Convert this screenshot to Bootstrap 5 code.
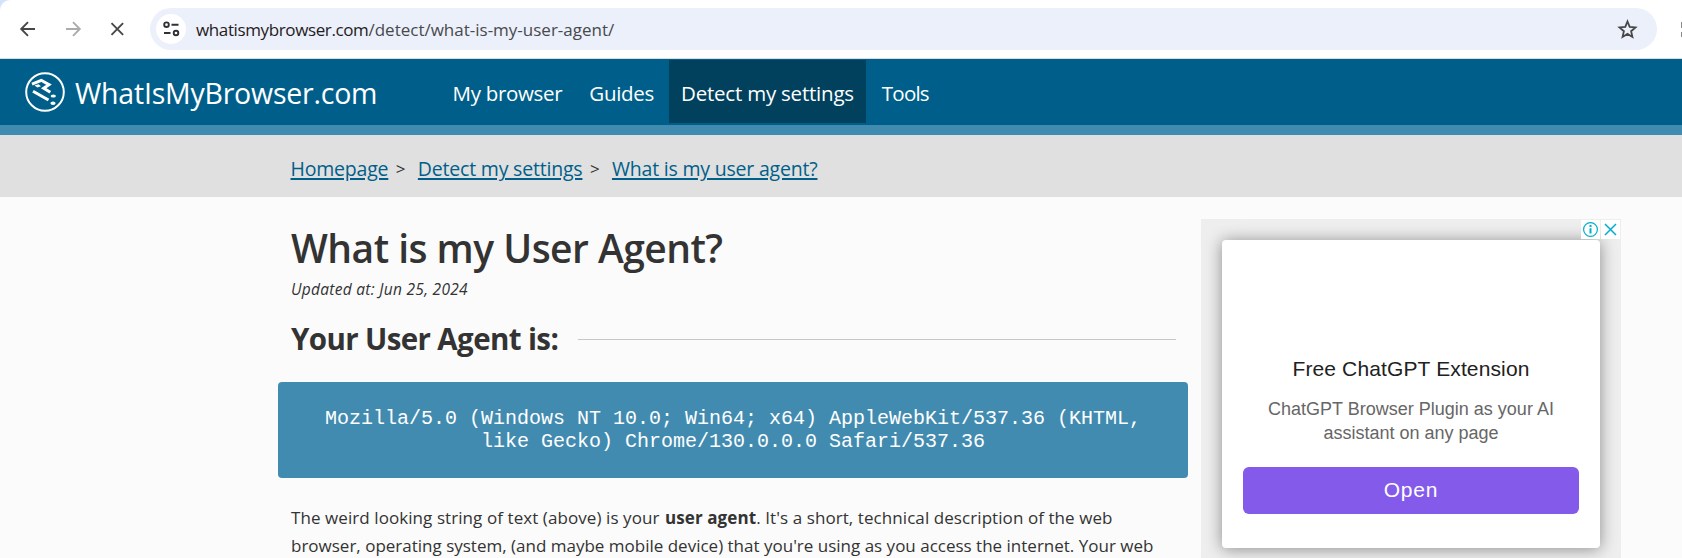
<!DOCTYPE html>
<html lang="en">
<head>
<meta charset="utf-8">
<title>What is my user agent?</title>
<meta name="viewport" content="width=device-width, initial-scale=1">
<link href="https://cdn.jsdelivr.net/npm/bootstrap@5.3.0/dist/css/bootstrap.min.css" rel="stylesheet">
<style>
body{font-family:"Open Sans","Noto Sans",sans-serif;color:#333;background:#fbfbfb;height:558px;overflow:hidden}
.strip{background:#d3e2fd}
.toolbar{height:59px;background:#fff;border-bottom:1px solid #dcdcdc;border-top-left-radius:10px;padding-left:16px}
.tool-ico{width:24px;height:24px;flex:none}
.tool-ico + .tool-ico{margin-left:20.5px}
.omnibox{width:1507px;height:42px;margin-left:21px;background:#ecf0fa;border-radius:21px;padding:0 18px 0 6px}
.site-info{width:30px;height:30px;background:#fff}
.url{font-size:17px;line-height:24px;margin:1px 0 0 10px;color:#47494d}
.url b{font-weight:400;color:#1f2023;letter-spacing:-.38px}
.site-nav{height:76px;background:#005f8a;border-bottom:10px solid #428bb0;padding:0 0 0 25px}
.brand-name{font-size:28.5px;line-height:40px;letter-spacing:-.22px;color:#fff;margin:2px 0 0 10px;width:365px}
.site-nav .nav{gap:2px;margin-bottom:1px}
.site-nav .nav-link{font-size:20.5px;line-height:66px;height:63px;padding:0 12.5px;color:#fff;letter-spacing:-.3px;white-space:nowrap}
.site-nav .nav-link.active{background:#01415e;letter-spacing:-.22px}
.site-nav .nav-link.tight{letter-spacing:-.8px;margin-left:1px}
.crumbs{height:62px;background:#e0e0e0;padding:19px 0 0 290.5px;font-size:19.5px;line-height:30px;letter-spacing:-.2px}
.crumbs a{color:#005f8a;text-decoration-thickness:2px;text-underline-offset:2px}
.crumbs span{font-size:17px;margin:0 8.500px 0 7.500px}
.page{padding-left:278px}
.main-col{width:910px;padding-top:26px}
.inset{padding:0 12px 0 13px}
h1{font-size:39px;line-height:50px;font-weight:600;letter-spacing:-.53px}
.updated{font-size:15.5px;line-height:24px;margin:4px 0 18px;font-style:italic;letter-spacing:.29px}
h2{font-size:29.5px;line-height:40px;font-weight:700;letter-spacing:-.62px;white-space:nowrap}
.rule{height:1px;background:#c6c8c7;margin:0 0 0 20px}
.agent{height:96px;background:#428bb0;border-radius:4px;margin-top:23px;padding-top:25px;color:#fff;font:20px/23px "Liberation Mono",monospace}
.intro{font-size:17px;line-height:28px;margin-top:26px;white-space:nowrap}
.intro span{display:block}
.i1{letter-spacing:.075px}.i2{letter-spacing:0}
.i1 strong{letter-spacing:.1px;margin-left:1px}
.ad{width:420px;height:361px;margin:22px 0 0 13px;background:#eee;padding:21px;font-family:"Liberation Sans",Arial,sans-serif}
.ad-card{width:378px;height:308px;border-radius:4px;background:#fff;box-shadow:0 1px 16px rgba(0,0,0,.42);padding:117px 21px 0}
.ad-title{font-size:21px;line-height:24px;color:#212121;letter-spacing:.13px}
.ad-text{font-size:18px;line-height:24px;color:#666;margin-top:16px}
.ad-open{height:47px;background:#845aeb;border-radius:6px;color:#fff;font-size:21px;line-height:45px;letter-spacing:.8px;margin-top:22px}
.ad-marks{top:1px;right:1px;gap:1px}
.ad-marks svg{background:#fff;width:19px;height:19px;display:block}
</style>
</head>
<body>
<div class="strip">
<div class="toolbar d-flex align-items-center">
<svg class="tool-ico" viewBox="0 0 24 24" fill="none" stroke="#474747" stroke-width="1.900"><path d="M19 12H5.500M12 5.200 5.200 12l6.800 6.800"/></svg>
<svg class="tool-ico" viewBox="0 0 24 24" fill="none" stroke="#ababab" stroke-width="1.900"><path d="M5 12h13.500M12 5.200l6.800 6.800-6.800 6.800"/></svg>
<svg class="tool-ico" viewBox="0 0 24 24" fill="none" stroke="#474747" stroke-width="1.900"><path d="m6.500 6.200 11.600 11.600m0-11.600L6.500 17.800"/></svg>
<div class="omnibox d-flex align-items-center">
<div class="site-info rounded-circle flex-shrink-0">
<svg class="d-block" width="30" height="30" viewBox="0 0 30 30" fill="none" stroke="#303134" stroke-width="1.900"><circle cx="10.500" cy="10.700" r="2.300"/><path d="M15.500 10.700h7M8 19h6.500"/><circle cx="20" cy="19" r="2.300"/></svg>
</div>
<div class="url flex-grow-1"><b>whatismybrowser.com</b>/detect/what-is-my-user-agent/</div>
<svg width="24" height="24" viewBox="0 0 24 24" fill="none" stroke="#474747" stroke-width="1.800"><path d="m12.500 4.500 2.200 5.400 5.800.5-4.400 3.800 1.300 5.700-4.900-3-4.900 3 1.300-5.700-4.400-3.800 5.800-.5z"/></svg>
</div>
<svg class="ms-auto" width="1" height="15" viewBox="0 0 1 15" fill="#8a8a8a"><path d="M0 0h1v6H0zM0 10h1v5H0z"/></svg>
</div>
</div>
<nav class="site-nav d-flex align-items-center">
<svg width="40" height="40" viewBox="0 0 40 40" class="flex-shrink-0"><circle cx="20" cy="20" r="18.800" fill="none" stroke="#fff" stroke-width="2"/><path d="M7 12.200 16.300 8.300l7.700 4.400-5.300 3.600 6.600 4M8 19.200 23.500 28" fill="none" stroke="#fff" stroke-width="3"/><path d="m9.500 13.500 4-1.200 2.500 1.900-3.500 1.300z" fill="#fff"/><g fill="#fff"><ellipse cx="28.300" cy="24" rx="2.600" ry="1.600"/><ellipse cx="28" cy="31.200" rx="2.600" ry="1.700"/></g></svg>
<div class="brand-name">WhatIsMyBrowser.com</div>
<div class="nav flex-nowrap">
<a class="nav-link" href="#">My browser</a>
<a class="nav-link" href="#">Guides</a>
<a class="nav-link active" href="#">Detect my settings</a>
<a class="nav-link tight" href="#">Tools</a>
</div>
</nav>
<div class="crumbs d-flex"><a href="#">Homepage</a><span>&gt;</span><a href="#" class="ms-1">Detect my settings</a><span>&gt;</span><a href="#" class="ms-1">What is my user agent?</a></div>
<div class="page d-flex align-items-start">
<main class="main-col flex-shrink-0">
<div class="inset">
<h1 class="m-0">What is my User Agent?</h1>
<p class="updated">Updated at: Jun 25, 2024</p>
<div class="d-flex align-items-center"><h2 class="m-0">Your User Agent is:</h2><div class="rule flex-grow-1"></div></div>
</div>
<div class="agent text-center">Mozilla/5.0 (Windows NT 10.0; Win64; x64) AppleWebKit/537.36 (KHTML,<br>like Gecko) Chrome/130.0.0.0 Safari/537.36</div>
<p class="intro inset"><span class="i1">The weird looking string of text (above) is your <strong>user agent</strong>. It's a short, technical description of the web</span><span class="i2">browser, operating system, (and maybe mobile device) that you're using as you access the internet. Your web</span></p>
</main>
<aside class="ad position-relative flex-shrink-0">
<div class="ad-card text-center">
<div class="ad-title">Free ChatGPT Extension</div>
<div class="ad-text">ChatGPT Browser Plugin as your AI<br>assistant on any page</div>
<div class="ad-open">Open</div>
</div>
<div class="ad-marks d-flex position-absolute">
<svg viewBox="0 0 19 19" fill="none" stroke="#00aecd"><circle cx="9.500" cy="9.500" r="6.900" stroke-width="1.200"/><path d="M9.500 8.200v5.300M9.500 5v2" stroke-width="2"/></svg>
<svg viewBox="0 0 19 19" fill="none" stroke="#00aecd" stroke-width="1.500"><path d="m4 4 11 11M15 4 4 15"/></svg>
</div>
</aside>
</div>
<script src="https://cdn.jsdelivr.net/npm/bootstrap@5.3.0/dist/js/bootstrap.bundle.min.js"></script>
</body>
</html>
